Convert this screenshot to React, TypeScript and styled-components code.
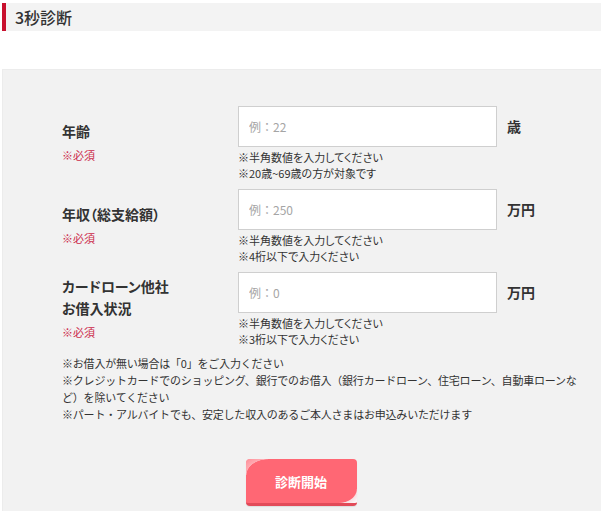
import React from "react";
import styled, { createGlobalStyle } from "styled-components";

const GlobalStyle = createGlobalStyle`
  html, body {
    margin: 0;
    padding: 0;
    background: #fff;
  }
  body {
    font-family: "Noto Sans CJK JP", "Noto Sans", sans-serif;
    color: #333;
  }
  * { box-sizing: border-box; }
`;

const Page = styled.div`
  padding: 3px 8px 0 2px;
  height: 511px;
  overflow: hidden;
`;

const SectionHeader = styled.h2`
  margin: 0;
  height: 28px;
  background: #f3f3f3;
  border-left: 4px solid #c8102e;
  padding-left: 9px;
  font-size: 16px;
  font-weight: 500;
  line-height: 28px;
  color: #333;
`;

const Panel = styled.section`
  margin-top: 38px;
  background: #f2f2f2;
  border-top: 1px solid #ececec;
  border-left: 1px solid #ececec;
  padding: 36px 0 40px 0;
  min-height: 460px;
`;

const Form = styled.div`
  padding-left: 59px;
`;

const Row = styled.div`
  display: grid;
  grid-template-columns: 176px 259px auto;
  margin-bottom: 8px;
`;

const LabelCell = styled.div`
  align-self: center;
  padding-bottom: 4px;
`;

const Label = styled.div`
  font-size: 14px;
  font-weight: 700;
  line-height: 22px;
  color: #333;
  font-feature-settings: "palt";
`;

const Required = styled.div`
  margin-top: 5px;
  font-size: 11px;
  line-height: 16px;
  color: #cc2a4a;
`;

const InputCell = styled.div`
  display: flex;
  flex-direction: column;
`;

const Input = styled.input`
  width: 259px;
  height: 41px;
  border: 1px solid #cfcfcf;
  background: #fff;
  padding: 0 10px;
  font-family: inherit;
  font-size: 12px;
  color: #333;
  outline: none;
  margin: 0;
  &::placeholder {
    color: #a5a5a5;
  }
`;

const Notes = styled.div`
  margin-top: 2px;
`;

const Note = styled.div`
  font-size: 11px;
  line-height: 16px;
  color: #333;
  font-feature-settings: "palt";
`;

const Unit = styled.div`
  padding-left: 10px;
  height: 40px;
  line-height: 40px;
  font-size: 14px;
  font-weight: 700;
  color: #333;
`;

const FootNotes = styled.div`
  width: 522px;
  font-size: 11px;
  line-height: 17px;
  letter-spacing: -0.2px;
  color: #333;
`;

const ButtonRow = styled.div`
  display: flex;
  justify-content: center;
  margin-top: 36px;
  padding-right: 2px;
`;

const SubmitButton = styled.button`
  position: relative;
  overflow: hidden;
  width: 111px;
  height: 47px;
  border: none;
  border-bottom: 3px solid #e24a58;
  border-radius: 4px;
  background: #ff6774;
  color: #fff;
  font-family: inherit;
  font-size: 13px;
  font-weight: 700;
  cursor: pointer;
  padding: 0;
  box-shadow: 0 1px 1px rgba(0, 0, 0, 0.08);

  &::before {
    content: "";
    position: absolute;
    top: 0;
    left: 0;
    width: 22px;
    height: 16px;
    border-top-left-radius: 4px;
    background: radial-gradient(
      ellipse at 100% 100%,
      transparent 0,
      transparent 68%,
      rgba(255, 255, 255, 0.45) 70%,
      rgba(255, 255, 255, 0.25) 100%
    );
  }

  &::after {
    content: "";
    position: absolute;
    right: 0;
    bottom: 0;
    width: 18px;
    height: 14px;
    background: radial-gradient(
      ellipse at 0% 0%,
      transparent 0,
      transparent 68%,
      #f7dfe2 72%,
      #ffffff 100%
    );
  }
`;

const ButtonLabel = styled.span`
  position: relative;
  z-index: 1;
`;

type FieldProps = {
  label: React.ReactNode;
  placeholder: string;
  unit: string;
  notes: string[];
};

const Field = ({ label, placeholder, unit, notes }: FieldProps) => (
  <Row>
    <LabelCell>
      <Label>{label}</Label>
      <Required>※必須</Required>
    </LabelCell>
    <InputCell>
      <Input type="text" placeholder={placeholder} />
      <Notes>
        {notes.map((n) => (
          <Note key={n}>{n}</Note>
        ))}
      </Notes>
    </InputCell>
    <Unit>{unit}</Unit>
  </Row>
);

export default function App() {
  return (
    <>
      <GlobalStyle />
      <Page>
        <SectionHeader>3秒診断</SectionHeader>
        <Panel>
          <Form>
            <Field
              label="年齢"
              placeholder="例：22"
              unit="歳"
              notes={["※半角数値を入力してください", "※20歳~69歳の方が対象です"]}
            />
            <Field
              label="年収（総支給額）"
              placeholder="例：250"
              unit="万円"
              notes={["※半角数値を入力してください", "※4桁以下で入力ください"]}
            />
            <Field
              label={
                <>
                  カードローン他社
                  <br />
                  お借入状況
                </>
              }
              placeholder="例：0"
              unit="万円"
              notes={["※半角数値を入力してください", "※3桁以下で入力ください"]}
            />
            <FootNotes>
              ※お借入が無い場合は「0」をご入力ください
              <br />
              ※クレジットカードでのショッピング、銀行でのお借入（銀行カードローン、住宅ローン、自動車ローンなど）を除いてください
              <br />
              ※パート・アルバイトでも、安定した収入のあるご本人さまはお申込みいただけます
            </FootNotes>
          </Form>
          <ButtonRow>
            <SubmitButton type="button">
              <ButtonLabel>診断開始</ButtonLabel>
            </SubmitButton>
          </ButtonRow>
        </Panel>
      </Page>
    </>
  );
}
